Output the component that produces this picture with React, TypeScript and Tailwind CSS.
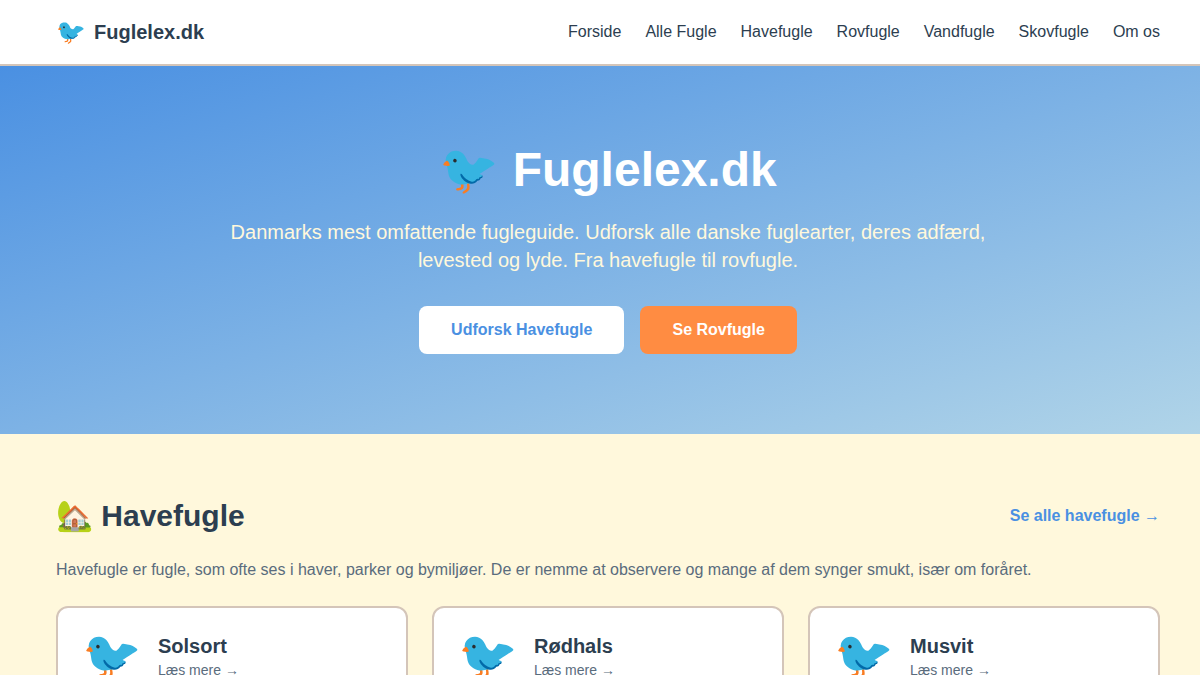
const navLinks = [
  { label: "Forside", href: "/" },
  { label: "Alle Fugle", href: "/fugle" },
  { label: "Havefugle", href: "/havefugle" },
  { label: "Rovfugle", href: "/rovfugle" },
  { label: "Vandfugle", href: "/vandfugle" },
  { label: "Skovfugle", href: "/skovfugle" },
  { label: "Om os", href: "/om-os" },
];

const birds = [
  { name: "Solsort", href: "/fugle/solsort" },
  { name: "Rødhals", href: "/fugle/roedhals" },
  { name: "Musvit", href: "/fugle/musvit" },
];

function BirdCard({ name, href }: { name: string; href: string }) {
  return (
    <a href={href} className="flex items-center gap-4 rounded-xl border-2 border-[#d4c5b9] bg-white p-6">
      <span className="text-5xl">🐦</span>
      <div>
        <h3 className="text-xl font-bold">{name}</h3>
        <p className="text-sm text-[#5a6c7d]">Læs mere →</p>
      </div>
    </a>
  );
}

export default function App() {
  return (
    <div className="min-h-screen overflow-x-hidden bg-[#fff8dc] font-['Liberation_Sans',Arial,sans-serif] text-[#2c3e50]">

      {/* Navbar */}
      <header className="border-b-2 border-[#d4c5b9] bg-white">
        <nav className="flex h-16 items-center justify-between pl-14 pr-10">
          <a href="/" className="flex items-center gap-2">
            <span className="text-2xl">🐦</span>
            <span className="text-xl font-bold">Fuglelex.dk</span>
          </a>
          <div className="flex gap-6">
            {navLinks.map((link) => (
              <a key={link.href} href={link.href} className="hover:text-[#4a90e2]">
                {link.label}
              </a>
            ))}
          </div>
        </nav>
      </header>

      {/* Hero Section */}
      <section className="bg-[linear-gradient(to_bottom_right,#4a90e2,#b0d4e8)] py-20 pl-14 pr-10 text-center text-white">
        <h1 className="mb-6 text-5xl font-bold">🐦 Fuglelex.dk</h1>
        <p className="mx-auto mb-8 max-w-3xl text-xl text-[#fff8dc]">
          Danmarks mest omfattende fugleguide. Udforsk alle danske fuglearter, deres adfærd, levested og lyde. Fra
          havefugle til rovfugle.
        </p>
        <div className="flex justify-center gap-4">
          <a href="/havefugle" className="rounded-lg bg-white px-8 py-3 font-bold text-[#4a90e2]">
            Udforsk Havefugle
          </a>
          <a href="/rovfugle" className="rounded-lg bg-[#ff8c42] px-8 py-3 font-bold text-white">
            Se Rovfugle
          </a>
        </div>
      </section>

      {/* Havefugle */}
      <section className="py-16 pl-14 pr-10">
        <div className="mb-6 flex items-center justify-between">
          <h2 className="text-3xl font-bold">🏡 Havefugle</h2>
          <a href="/havefugle" className="font-bold text-[#4a90e2]">
            Se alle havefugle →
          </a>
        </div>
        <p className="mb-6 text-[#5a6c7d]">
          Havefugle er fugle, som ofte ses i haver, parker og bymiljøer. De er nemme at observere og mange af dem synger
          smukt, især om foråret.
        </p>
        <div className="grid gap-6 md:grid-cols-3">
          {birds.map((bird) => (
            <BirdCard key={bird.name} name={bird.name} href={bird.href} />
          ))}
        </div>
      </section>
    </div>
  );
}
